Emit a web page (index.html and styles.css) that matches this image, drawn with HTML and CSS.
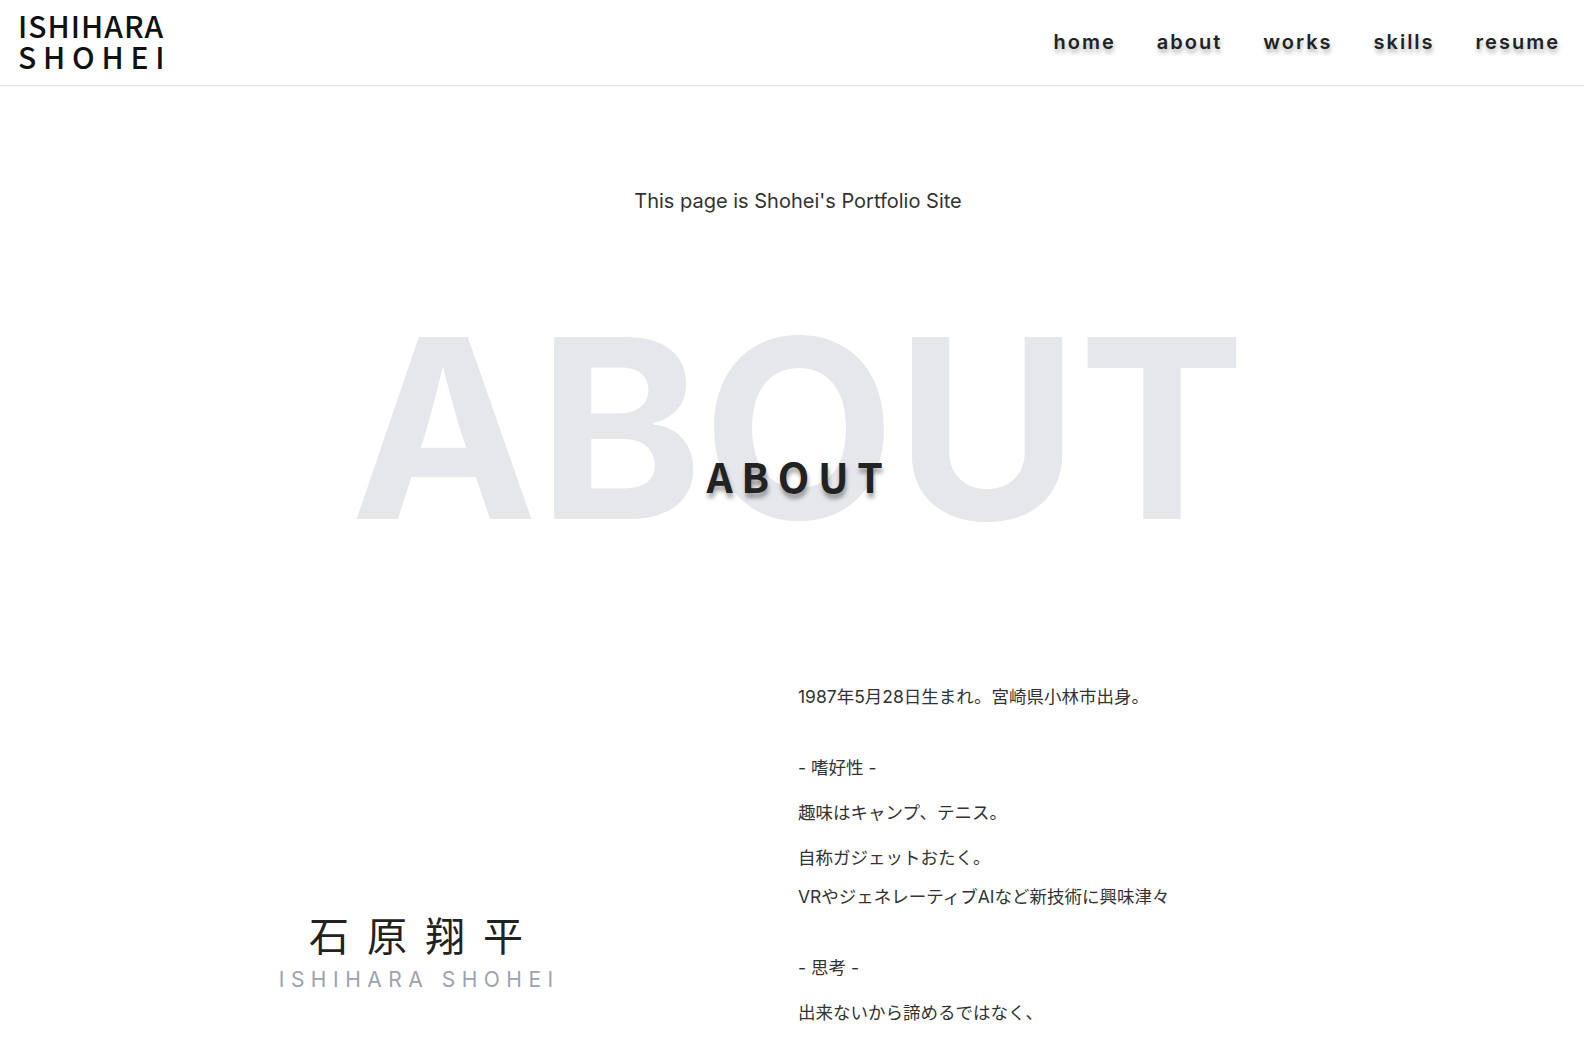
FILE: index.html
```html
<!DOCTYPE html>
<html lang="ja">
<head>
<meta charset="utf-8">
<title>ISHIHARA SHOHEI</title>
<link rel="stylesheet" href="styles.css">
</head>
<body>
<header class="site-header">
  <div class="logo">
    <span class="logo-line1">ISHIHARA</span>
    <span class="logo-line2">SHOHEI</span>
  </div>
  <nav class="nav">
    <a class="nav-link" href="#">home</a>
    <a class="nav-link" href="#">about</a>
    <a class="nav-link" href="#">works</a>
    <a class="nav-link" href="#">skills</a>
    <a class="nav-link" href="#">resume</a>
  </nav>
</header>
<main class="main">
  <p class="tagline">This page is Shohei's Portfolio Site</p>
  <section class="about">
    <div class="about-title">
      <span class="title-bg">ABOUT</span>
      <h2 class="title-fg">ABOUT</h2>
    </div>
    <div class="about-body">
      <div class="name-col">
        <div class="name-jp">石原翔平</div>
        <div class="name-en">ISHIHARA SHOHEI</div>
      </div>
      <div class="text-col">
        <p class="line">1987年5月28日生まれ。宮崎県小林市出身。</p>
        <p class="line head">- 嗜好性 -</p>
        <p class="line">趣味はキャンプ、テニス。</p>
        <p class="line tight">自称ガジェットおたく。</p>
        <p class="line">VRやジェネレーティブAIなど新技術に興味津々</p>
        <p class="line head">- 思考 -</p>
        <p class="line last">出来ないから諦めるではなく、</p>
        <p class="line">どうすれば出来るかを考える。</p>
      </div>
    </div>
  </section>
</main>
</body>
</html>
```

FILE: styles.css
```css
* { box-sizing: border-box; }
html, body { margin: 0; padding: 0; }
body {
  background: #fff;
  color: #333;
  font-family: Inter, "Noto Sans CJK JP", sans-serif;
  overflow: hidden;
}
.site-header {
  height: 86px;
  display: flex;
  justify-content: space-between;
  align-items: center;
  padding: 0 24px 0 18px;
  border-bottom: 1px solid #e3e3e3;
  box-shadow: 0 1px 2px rgba(0,0,0,0.04);
}
.logo {
  display: flex;
  flex-direction: column;
  font-family: "Noto Sans CJK JP", sans-serif;
  font-size: 30px;
  font-weight: 500;
  line-height: 31px;
  color: #111;
  margin-top: -3px;
}
.logo-line1 { letter-spacing: 1px; }
.logo-line2 { letter-spacing: 6.8px; }
.nav {
  display: flex;
  gap: 41px;
  align-items: center;
  margin-top: -2px;
}
.nav-link {
  font-family: Inter, sans-serif;
  font-size: 20px;
  font-weight: 600;
  letter-spacing: 2px;
  color: #222;
  text-decoration: none;
  text-shadow: 1px 4px 4px rgba(0,0,0,0.3);
}
.main {
  padding-left: 12px;
}
.tagline {
  margin: 101px 0 0;
  text-align: center;
  font-size: 20px;
  line-height: 28px;
  color: #333;
}
.about-title {
  position: relative;
  margin-top: 88px;
  text-align: center;
  height: 250px;
}
.title-bg {
  display: block;
  font-family: Inter, sans-serif;
  font-weight: 700;
  font-size: 250px;
  line-height: 250px;
  color: #e5e7eb;
}
.title-fg {
  position: absolute;
  left: 0;
  right: 0;
  top: 147px;
  margin: 0;
  font-family: "Noto Sans CJK JP", sans-serif;
  font-weight: 700;
  font-size: 41px;
  line-height: 50px;
  letter-spacing: 0.21em;
  text-indent: 0.05em;
  color: #222;
  text-shadow: 1px 5px 4px rgba(0,0,0,0.35);
}
.about-body {
  display: grid;
  grid-template-columns: 786px 1fr;
  margin-top: 132px;
}
.name-col {
  padding-left: 22px;
  padding-top: 226px;
  display: flex;
  flex-direction: column;
  align-items: center;
  gap: 9px;
}
.name-jp {
  font-family: "Noto Sans CJK JP", sans-serif;
  font-size: 40px;
  line-height: 46px;
  letter-spacing: 18px;
  text-indent: 18px;
  color: #222;
}
.name-en {
  font-family: Inter, sans-serif;
  font-size: 21px;
  line-height: 28px;
  letter-spacing: 0.31em;
  text-indent: 0.31em;
  color: #9ca3af;
}
.text-col {
  font-size: 17.5px;
  color: #333;
}
.line {
  margin: 0 0 21px;
  line-height: 24px;
}
.line.head { margin-top: 47px; }
.line.tight { margin-bottom: 15px; }
.line.last { margin-bottom: 20px; }
```
